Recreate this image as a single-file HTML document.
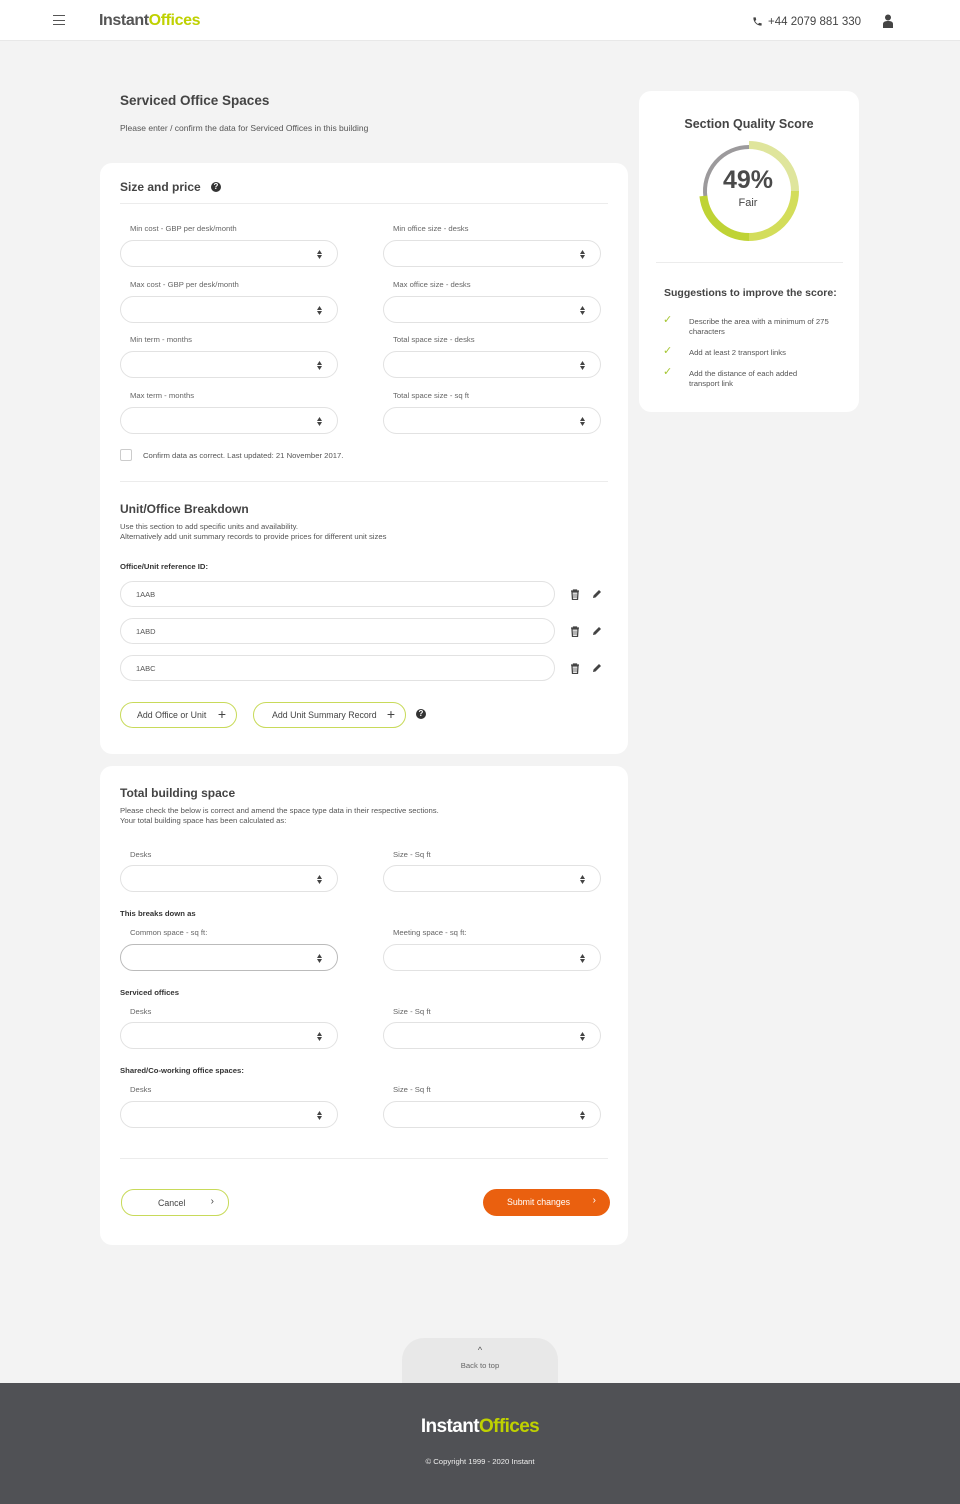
<!DOCTYPE html>
<html><head><meta charset="utf-8"><style>
*{box-sizing:border-box;margin:0;padding:0}
body{width:960px;height:1504px;background:#f3f3f3;font-family:"Liberation Sans",Arial,sans-serif;color:#4a4a4a;position:relative;overflow:hidden}
.abs{position:absolute}
.hdr{left:0;top:0;width:960px;height:41px;background:#fff;border-bottom:1px solid #e8e8e8}
.card{background:#fff;border-radius:12px}
.lbl{font-size:7.7px;color:#666}
.inp{height:27px;border:1px solid #e2e2e2;border-radius:14px;background:#fff}
.inp .sp{position:absolute;right:15px;top:9px;width:5px;height:9px}
.h2{font-size:12.5px;font-weight:bold;color:#444}
.small{font-size:7.7px;color:#555;line-height:10px}
.bold8{font-size:7.7px;font-weight:bold;color:#333}
.ref{left:120px;width:435px;height:26px;border:1px solid #e2e2e2;border-radius:13px;font-size:7.5px;color:#555;padding:8px 0 0 15px}
.btn{height:26px;border:1.5px solid #c8da5a;border-radius:13px;font-size:8.8px;color:#444;background:#fff}
.q{width:10px;height:10px;border-radius:50%;background:#333;color:#fff;font-size:8px;font-weight:bold;text-align:center;line-height:10px}
</style></head><body>
<div class="abs hdr"></div>
<div class="abs" style="left:53px;top:15px;width:12px"><div style="height:1px;background:#555;margin-bottom:3.5px"></div><div style="height:1px;background:#555;margin-bottom:3.5px"></div><div style="height:1px;background:#555"></div></div>
<div class="abs" style="left:99px;top:12px;font-size:16px;font-weight:bold;letter-spacing:-0.4px;color:#555">Instant<span style="color:#bfd100">Offices</span></div>
<svg class="abs" style="left:752px;top:15px" width="11" height="13" viewBox="0 0 24 24"><path fill="#444" d="M6.6 10.8c1.4 2.8 3.8 5.1 6.6 6.6l2.2-2.2c.3-.3.7-.4 1-.2 1.1.4 2.3.6 3.6.6.6 0 1 .4 1 1V20c0 .6-.4 1-1 1C10.6 21 3 13.4 3 4c0-.6.4-1 1-1h3.5c.6 0 1 .4 1 1 0 1.3.2 2.5.6 3.6.1.3 0 .7-.2 1z"/></svg>
<div class="abs" style="left:768px;top:16px;font-size:11.5px;color:#444">+44 2079 881 330</div>
<svg class="abs" style="left:883px;top:14px" width="10" height="14" viewBox="0 0 10 14"><circle cx="5" cy="3.5" r="3" fill="#444"/><path d="M0 14V10c0-2 2-3 5-3s5 1 5 3v4z" fill="#444"/></svg>

<div class="abs h2" style="left:120px;top:93px;font-size:13.5px">Serviced Office Spaces</div>
<div class="abs small" style="left:120px;top:123px;font-size:8.5px">Please enter / confirm the data for Serviced Offices in this building</div>

<!-- card 1 -->
<div class="abs card" style="left:100px;top:163px;width:528px;height:591px"></div>
<div class="abs h2" style="left:120px;top:180px;font-size:12px">Size and price</div>
<div class="abs q" style="left:211px;top:182px">?</div>
<div class="abs" style="left:120px;top:203px;width:488px;height:1px;background:#ececec"></div>

<div class="abs lbl" style="left:130px;top:224px">Min cost - GBP per desk/month</div>
<div class="abs lbl" style="left:393px;top:224px">Min office size - desks</div>
<div class="abs lbl" style="left:130px;top:280px">Max cost - GBP per desk/month</div>
<div class="abs lbl" style="left:393px;top:280px">Max office size - desks</div>
<div class="abs lbl" style="left:130px;top:335px">Min term - months</div>
<div class="abs lbl" style="left:393px;top:335px">Total space size - desks</div>
<div class="abs lbl" style="left:130px;top:391px">Max term - months</div>
<div class="abs lbl" style="left:393px;top:391px">Total space size - sq ft</div>

<div class="abs inp" style="left:120px;top:240px;width:218px"><svg class="sp" viewBox="0 0 5 9"><path d="M0 4L2.5 0 5 4zM0 5l2.5 4L5 5z" fill="#444"/></svg></div>
<div class="abs inp" style="left:383px;top:240px;width:218px"><svg class="sp" viewBox="0 0 5 9"><path d="M0 4L2.5 0 5 4zM0 5l2.5 4L5 5z" fill="#444"/></svg></div>
<div class="abs inp" style="left:120px;top:296px;width:218px"><svg class="sp" viewBox="0 0 5 9"><path d="M0 4L2.5 0 5 4zM0 5l2.5 4L5 5z" fill="#444"/></svg></div>
<div class="abs inp" style="left:383px;top:296px;width:218px"><svg class="sp" viewBox="0 0 5 9"><path d="M0 4L2.5 0 5 4zM0 5l2.5 4L5 5z" fill="#444"/></svg></div>
<div class="abs inp" style="left:120px;top:351px;width:218px"><svg class="sp" viewBox="0 0 5 9"><path d="M0 4L2.5 0 5 4zM0 5l2.5 4L5 5z" fill="#444"/></svg></div>
<div class="abs inp" style="left:383px;top:351px;width:218px"><svg class="sp" viewBox="0 0 5 9"><path d="M0 4L2.5 0 5 4zM0 5l2.5 4L5 5z" fill="#444"/></svg></div>
<div class="abs inp" style="left:120px;top:407px;width:218px"><svg class="sp" viewBox="0 0 5 9"><path d="M0 4L2.5 0 5 4zM0 5l2.5 4L5 5z" fill="#444"/></svg></div>
<div class="abs inp" style="left:383px;top:407px;width:218px"><svg class="sp" viewBox="0 0 5 9"><path d="M0 4L2.5 0 5 4zM0 5l2.5 4L5 5z" fill="#444"/></svg></div>

<div class="abs" style="left:120px;top:449px;width:12px;height:12px;border:1px solid #ccc;border-radius:2px"></div>
<div class="abs small" style="left:143px;top:451px">Confirm data as correct. Last updated: 21 November 2017.</div>
<div class="abs" style="left:120px;top:481px;width:488px;height:1px;background:#ececec"></div>

<div class="abs h2" style="left:120px;top:502px;font-size:12px">Unit/Office Breakdown</div>
<div class="abs small" style="left:120px;top:522px">Use this section to add specific units and availability.<br>Alternatively add unit summary records to provide prices for different unit sizes</div>
<div class="abs bold8" style="left:120px;top:562px">Office/Unit reference ID:</div>

<div class="abs ref" style="top:581px">1AAB</div>
<div class="abs ref" style="top:618px">1ABD</div>
<div class="abs ref" style="top:655px">1ABC</div>
<svg width="0" height="0" style="position:absolute"><defs>
<symbol id="tr" viewBox="0 0 10 11"><path d="M1 2h8M3.5 2V1h3v1M2 3h6l-.5 7.5h-5z" fill="none" stroke="#444" stroke-width="1.3"/><path d="M4 4.5v4.5M6 4.5v4.5" stroke="#444" stroke-width=".8"/></symbol>
<symbol id="pn" viewBox="0 0 10 10"><path d="M1 9l.5-2.5L7 1l2 2-5.5 5.5z" fill="#444"/></symbol></defs></svg>
<svg class="abs" style="left:570px;top:589px" width="10" height="11"><use href="#tr"/></svg><svg class="abs" style="left:592px;top:589px" width="10" height="10"><use href="#pn"/></svg>
<svg class="abs" style="left:570px;top:626px" width="10" height="11"><use href="#tr"/></svg><svg class="abs" style="left:592px;top:626px" width="10" height="10"><use href="#pn"/></svg>
<svg class="abs" style="left:570px;top:663px" width="10" height="11"><use href="#tr"/></svg><svg class="abs" style="left:592px;top:663px" width="10" height="10"><use href="#pn"/></svg>

<div class="abs btn" style="left:120px;top:702px;width:117px;padding:7px 0 0 16px">Add Office or Unit<span style="position:absolute;right:10px;top:3px;font-size:14px">+</span></div>
<div class="abs btn" style="left:253px;top:702px;width:153px;padding:7px 0 0 18px">Add Unit Summary Record<span style="position:absolute;right:10px;top:3px;font-size:14px">+</span></div>
<div class="abs q" style="left:416px;top:709px">?</div>

<!-- card 2 -->
<div class="abs card" style="left:100px;top:766px;width:528px;height:479px"></div>
<div class="abs h2" style="left:120px;top:786px;font-size:12px">Total building space</div>
<div class="abs small" style="left:120px;top:806px">Please check the below is correct and amend the space type data in their respective sections.<br>Your total building space has been calculated as:</div>

<div class="abs lbl" style="left:130px;top:850px">Desks</div>
<div class="abs lbl" style="left:393px;top:850px">Size - Sq ft</div>
<div class="abs inp" style="left:120px;top:865px;width:218px"><svg class="sp" viewBox="0 0 5 9"><path d="M0 4L2.5 0 5 4zM0 5l2.5 4L5 5z" fill="#444"/></svg></div>
<div class="abs inp" style="left:383px;top:865px;width:218px"><svg class="sp" viewBox="0 0 5 9"><path d="M0 4L2.5 0 5 4zM0 5l2.5 4L5 5z" fill="#444"/></svg></div>
<div class="abs bold8" style="left:120px;top:909px">This breaks down as</div>
<div class="abs lbl" style="left:130px;top:928px">Common space - sq ft:</div>
<div class="abs lbl" style="left:393px;top:928px">Meeting space - sq ft:</div>
<div class="abs inp" style="left:120px;top:944px;width:218px;border-color:#bbb"><svg class="sp" viewBox="0 0 5 9"><path d="M0 4L2.5 0 5 4zM0 5l2.5 4L5 5z" fill="#444"/></svg></div>
<div class="abs inp" style="left:383px;top:944px;width:218px"><svg class="sp" viewBox="0 0 5 9"><path d="M0 4L2.5 0 5 4zM0 5l2.5 4L5 5z" fill="#444"/></svg></div>
<div class="abs bold8" style="left:120px;top:988px">Serviced offices</div>
<div class="abs lbl" style="left:130px;top:1007px">Desks</div>
<div class="abs lbl" style="left:393px;top:1007px">Size - Sq ft</div>
<div class="abs inp" style="left:120px;top:1022px;width:218px"><svg class="sp" viewBox="0 0 5 9"><path d="M0 4L2.5 0 5 4zM0 5l2.5 4L5 5z" fill="#444"/></svg></div>
<div class="abs inp" style="left:383px;top:1022px;width:218px"><svg class="sp" viewBox="0 0 5 9"><path d="M0 4L2.5 0 5 4zM0 5l2.5 4L5 5z" fill="#444"/></svg></div>
<div class="abs bold8" style="left:120px;top:1066px">Shared/Co-working office spaces:</div>
<div class="abs lbl" style="left:130px;top:1085px">Desks</div>
<div class="abs lbl" style="left:393px;top:1085px">Size - Sq ft</div>
<div class="abs inp" style="left:120px;top:1101px;width:218px"><svg class="sp" viewBox="0 0 5 9"><path d="M0 4L2.5 0 5 4zM0 5l2.5 4L5 5z" fill="#444"/></svg></div>
<div class="abs inp" style="left:383px;top:1101px;width:218px"><svg class="sp" viewBox="0 0 5 9"><path d="M0 4L2.5 0 5 4zM0 5l2.5 4L5 5z" fill="#444"/></svg></div>
<div class="abs" style="left:120px;top:1158px;width:488px;height:1px;background:#ececec"></div>

<div class="abs btn" style="left:121px;top:1189px;width:108px;height:27px;padding:8px 0 0 36px">Cancel<span style="position:absolute;right:14px;top:6px;font-size:10px">›</span></div>
<div class="abs" style="left:483px;top:1189px;width:127px;height:27px;border-radius:14px;background:#ea600f;color:#fff;font-size:8.8px;padding:8px 0 0 24px">Submit changes<span style="position:absolute;right:14px;top:6px;font-size:10px">›</span></div>

<!-- right card -->
<div class="abs card" style="left:639px;top:91px;width:220px;height:321px"></div>
<div class="abs" style="left:639px;top:117px;width:220px;text-align:center;font-size:12.5px;font-weight:bold;color:#444">Section Quality Score</div>
<svg class="abs" style="left:698px;top:140px" width="102" height="102" viewBox="0 0 102 102">
<path d="M51 7A44 44 0 0 0 7.4 57" fill="none" stroke="#9c9a9c" stroke-width="4"/>
<path d="M51 5A46 46 0 0 1 97 51" fill="none" stroke="#dfe59c" stroke-width="8"/>
<path d="M97 51A46 46 0 0 1 51 97" fill="none" stroke="#d3dd5a" stroke-width="8"/>
<path d="M51 97A46 46 0 0 1 5.4 56" fill="none" stroke="#bfd335" stroke-width="8"/>
</svg>
<div class="abs" style="left:698px;top:166px;width:100px;text-align:center;font-size:25px;font-weight:bold;color:#4a4a4a">49%</div>
<div class="abs" style="left:698px;top:197px;width:100px;text-align:center;font-size:11px;color:#444">Fair</div>
<div class="abs" style="left:656px;top:262px;width:187px;height:1px;background:#ececec"></div>
<div class="abs" style="left:664px;top:287px;font-size:10.5px;font-weight:bold;color:#444">Suggestions to improve the score:</div>
<div class="abs" style="left:663px;top:313px;color:#a6c633;font-size:11px">✓</div>
<div class="abs small" style="left:689px;top:317px;width:142px">Describe the area with a minimum of 275 characters</div>
<div class="abs" style="left:663px;top:344px;color:#a6c633;font-size:11px">✓</div>
<div class="abs small" style="left:689px;top:348px">Add at least 2 transport links</div>
<div class="abs" style="left:663px;top:365px;color:#a6c633;font-size:11px">✓</div>
<div class="abs small" style="left:689px;top:369px;width:130px">Add the distance of each added transport link</div>

<!-- footer -->
<div class="abs" style="left:402px;top:1338px;width:156px;height:50px;background:#e8e8e8;border-radius:22px 22px 0 0"></div>
<div class="abs" style="left:402px;top:1345px;width:156px;text-align:center;font-size:9px;color:#555">^</div>
<div class="abs" style="left:402px;top:1361px;width:156px;text-align:center;font-size:7.7px;color:#666">Back to top</div>
<div class="abs" style="left:0;top:1383px;width:960px;height:121px;background:#505155"></div>
<div class="abs" style="left:0;top:1416px;width:960px;text-align:center;font-size:19px;font-weight:bold;letter-spacing:-0.6px;color:#fff">Instant<span style="color:#bfd100">Offices</span></div>
<div class="abs" style="left:0;top:1457px;width:960px;text-align:center;font-size:7.7px;color:#eee">© Copyright 1999 - 2020 Instant</div>
</body></html>
